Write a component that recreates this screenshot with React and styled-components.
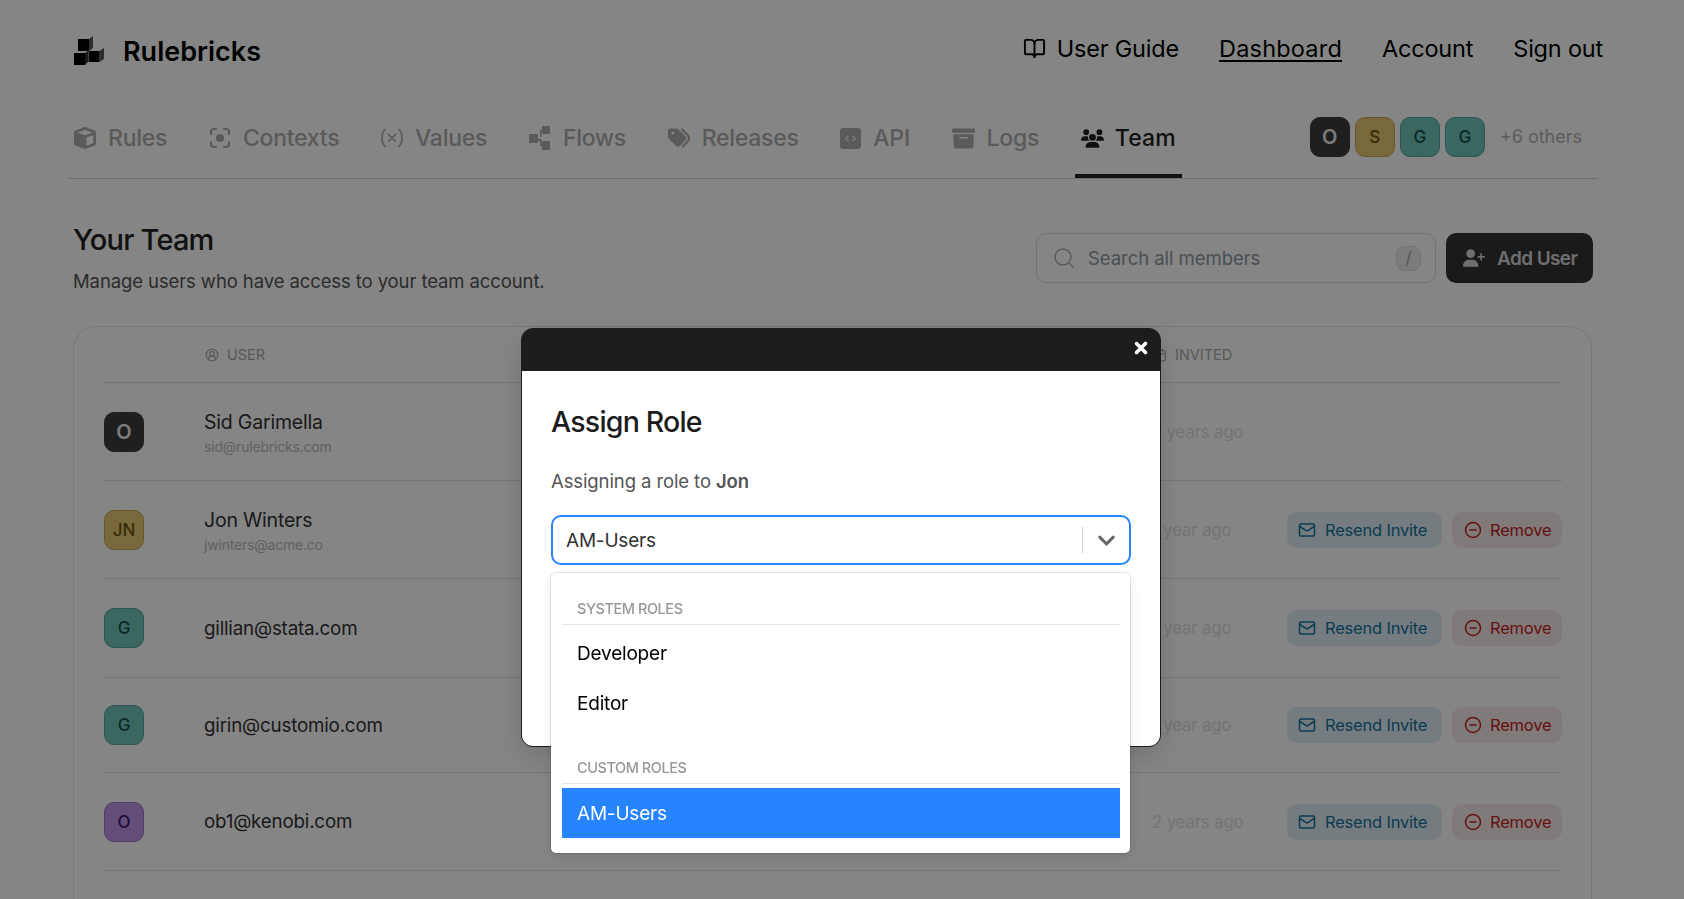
import React from 'react'
import styled, { createGlobalStyle } from 'styled-components'
import { FaCube, FaTags, FaBoxArchive, FaUsers, FaUserPlus, FaXmark } from 'react-icons/fa6'
import { BookOpen, Search, Mail, CircleMinus, CircleUserRound, Calendar, ChevronDown } from 'lucide-react'

const GlobalStyle = createGlobalStyle`
  html, body { margin: 0; padding: 0; background: #fff; }
  body { font-family: Inter, "Noto Sans", sans-serif; color: #222; }
  * { box-sizing: border-box; }
`

const Page = styled.div`
  width: 1684px;
  height: 899px;
  overflow: hidden;
  position: relative;
`
const Header = styled.header`
  height: 98px;
  padding: 4px 81px 0 73px;
  display: flex;
  align-items: center;
  justify-content: space-between;
`
const Brand = styled.div`
  display: flex;
  align-items: center;
  gap: 18px;
  font-size: 27px;
  font-weight: 600;
  letter-spacing: 0;
  color: #000;
`
const TopNav = styled.nav`
  display: flex;
  align-items: center;
  gap: 40px;
  font-size: 23.5px;
  letter-spacing: -0.2px;
  color: #000;
  margin-top: -6px;
`
const TopLink = styled.a`
  display: flex;
  align-items: center;
  gap: 11px;
  letter-spacing: ${p => (p.$active ? '0.2px' : 'inherit')};
  text-decoration: ${p => (p.$active ? 'underline' : 'none')};
  text-underline-offset: 3px;
  text-decoration-thickness: 2px;
`
const TabBar = styled.div`
  margin: 0 86px 0 68px;
  height: 81px;
  display: flex;
  align-items: stretch;
  justify-content: space-between;
  border-bottom: 1px solid #d5d5d5;
`
const Tabs = styled.div`
  display: flex;
  gap: 29.700px;
`
const Tab = styled.div`
  display: flex;
  align-items: center;
  gap: ${p => (p.$active ? '11px' : '12px')};
  padding: 4px 6px 0;
  font-size: 23px;
  font-weight: 500;
  letter-spacing: ${p => (p.$active ? '0.1px' : '-0.25px')};
  color: ${p => (p.$active ? '#1e1e1e' : '#adadad')};
  border-bottom: 4px solid ${p => (p.$active ? '#222' : 'transparent')};
`
const Presence = styled.div`
  display: flex;
  align-items: center;
  gap: 5px;
  padding: 0 16px 3px 0;
`
const Others = styled.span`
  margin-left: 10px;
  font-size: 18px;
  color: #b4b4b4;
`
const tones = {
  dark: { bg: '#3c3c3c', fg: '#eee', line: '#3c3c3c' },
  gold: { bg: '#e8c872', fg: '#6b5612', line: '#c4a655' },
  teal: { bg: '#72c6ba', fg: '#12504a', line: '#58a69a' },
  purple: { bg: '#bd96e8', fg: '#3c1e62', line: '#9c78c4' },
}
const Avatar = styled.div`
  width: 40px;
  height: 40px;
  flex: none;
  border-radius: 10px;
  display: flex;
  align-items: center;
  justify-content: center;
  font-size: ${p => (p.$tone === 'dark' ? '20px' : '17px')};
  font-weight: ${p => (p.$tone === 'dark' ? 600 : 500)};
  background: ${p => tones[p.$tone].bg};
  color: ${p => tones[p.$tone].fg};
  border: 1px solid ${p => tones[p.$tone].line};
`

const Section = styled.section`
  padding: 44px 92px 0 73px;
`
const SectionHead = styled.div`
  display: flex;
  justify-content: space-between;
  align-items: flex-start;
`
const Title = styled.h1`
  margin: 1px 0 0;
  font-size: 29px;
  line-height: 32px;
  font-weight: 500;
  letter-spacing: -0.8px;
  color: #222;
`
const Description = styled.p`
  margin: 13px 0 0;
  font-size: 18.5px;
  line-height: 24px;
  letter-spacing: -0.1px;
  color: #555;
`
const Toolbar = styled.div`
  display: flex;
  gap: 10px;
  margin: 10px -1px 0 0;
`
const SearchBox = styled.div`
  width: 400px;
  height: 50px;
  border: 1px solid #dcdcdc;
  border-radius: 10px;
  padding: 0 14px 0 15px;
  display: flex;
  align-items: center;
  gap: 12px;
  color: #8f98a3;
  font-size: 18.5px;
  letter-spacing: -0.05px;
  & > svg { color: #b0b0b0; }
`
const SearchText = styled.span`
  flex: 1;
`
const Kbd = styled.span`
  width: 25px;
  height: 25px;
  border-radius: 8px;
  border: 1px solid #dcdcdc;
  background: #eee;
  display: flex;
  align-items: center;
  justify-content: center;
  font-size: 17px;
  color: #a5a5a5;
`
const AddButton = styled.button`
  width: 147px;
  height: 50px;
  border: 0;
  border-radius: 10px;
  background: #333;
  color: #d4d4d4;
  display: flex;
  align-items: center;
  gap: 12px;
  padding: 0 0 0 17px;
  font: 600 19px Inter, sans-serif;
  letter-spacing: -0.6px;
`
const Card = styled.div`
  margin-top: 33px;
  border: 1px solid #e4e4e4;
  border-radius: 22px;
  padding: 0 29px 120px 30px;
`
const TableHead = styled.div`
  height: 56px;
  display: grid;
  grid-template-columns: 100px 948px 1fr;
  align-items: center;
  border-bottom: 1px solid #dfdfdf;
`
const HeadCell = styled.div`
  grid-column: ${p => p.$col};
  display: flex;
  align-items: center;
  gap: 8px;
  padding: 0 0 0 1px;
  font-size: 14.5px;
  color: #aaa;
`
const Row = styled.div`
  height: ${p => p.$h}px;
  display: grid;
  grid-template-columns: 100px 948px 135px 275px;
  align-items: center;
  border-bottom: 1px solid #e2e2e2;
`
const Who = styled.div`
  padding-top: ${p => (p.$plain ? 0 : 2)}px;
`
const Name = styled.div`
  font-size: ${p => (p.$plain ? '18.800px' : '19.500px')};
  letter-spacing: -0.2px;
  color: #333;
`
const Email = styled.div`
  margin-top: 4px;
  font-size: 14px;
  letter-spacing: -0.2px;
  color: #bababa;
`
const Invited = styled.div`
  font-size: 16.8px;
  letter-spacing: -0.15px;
  color: #dedede;
`
const Actions = styled.div`
  display: flex;
  gap: 10px;
`
const Pill = styled.button`
  height: 36px;
  width: ${p => (p.$danger ? '110px' : '155px')};
  border: 0;
  border-radius: 10px;
  display: flex;
  align-items: center;
  gap: ${p => (p.$danger ? '8px' : '9px')};
  padding-left: ${p => (p.$danger ? '12px' : '11px')};
  background: ${p => (p.$danger ? '#f8eaea' : '#e0edf5')};
  color: ${p => (p.$danger ? '#c42222' : '#14739f')};
  font: 400 16.5px Inter, sans-serif;
  letter-spacing: -0.2px;
`

const Overlay = styled.div`
  position: fixed;
  inset: 0;
  background: rgba(0, 0, 0, 0.48);
  display: flex;
  justify-content: center;
  align-items: flex-start;
  padding: 328px 2px 0 0;
`
const Modal = styled.div`
  width: 640px;
  height: 419px;
  border: 1px solid #1c1c1c;
  border-radius: 12px;
  background: #1c1c1c;
  display: flex;
  flex-direction: column;
  box-shadow: 0 10px 30px rgba(0, 0, 0, 0.15);
`
const ModalBar = styled.div`
  height: 42px;
  flex: none;
  display: flex;
  align-items: center;
  justify-content: flex-end;
  padding: 0 10px 4px 0;
  color: #fff;
`
const ModalBody = styled.div`
  flex: 1;
  position: relative;
  background: #fff;
  border-radius: 0 0 11px 11px;
  padding: 33px 29px 0 29px;
`
const ModalTitle = styled.h2`
  margin: 0;
  font-size: 28.5px;
  line-height: 36px;
  font-weight: 500;
  letter-spacing: -0.8px;
  color: #1c1c1c;
`
const ModalText = styled.p`
  margin: 29px 0 0;
  font-size: 18.5px;
  line-height: 24px;
  letter-spacing: -0.1px;
  color: #555;
  & b { font-weight: 600; }
`
const Select = styled.div`
  margin-top: 22px;
  height: 50px;
  border: 2px solid #2684ff;
  border-radius: 10px;
  display: flex;
  align-items: center;
  padding: 0 0 0 13px;
  font-size: 19px;
  letter-spacing: -0.2px;
  color: #333;
`
const SelectValue = styled.span`
  flex: 1;
`
const SelectDivider = styled.span`
  width: 1px;
  height: 26px;
  background: #ccc;
`
const SelectArrow = styled.span`
  width: 46px;
  display: flex;
  justify-content: center;
  color: #666;
`
const Menu = styled.div`
  position: absolute;
  left: 29px;
  right: 30px;
  top: 202px;
  height: 280px;
  background: #fff;
  border-radius: 5px;
  padding: 19px 10px 0 11px;
  box-shadow: 0 0 0 1px rgba(0, 0, 0, 0.1), 0 4px 11px rgba(0, 0, 0, 0.1);
`
const GroupLabel = styled.div`
  height: 33px;
  margin-top: ${p => p.$top || 0}px;
  padding: 0 0 0 15px;
  display: flex;
  align-items: center;
  border-bottom: 1px solid #e6e6e6;
  font-size: 14.5px;
  font-weight: 500;
  letter-spacing: -0.45px;
  color: #999;
`
const Option = styled.div`
  height: 50px;
  margin-top: ${p => p.$top || 0}px;
  padding-left: 15px;
  display: flex;
  align-items: center;
  font-size: 19px;
  letter-spacing: -0.2px;
  color: ${p => (p.$selected ? '#fff' : '#000')};
  background: ${p => (p.$selected ? '#2684ff' : 'transparent')};
`

// three stacked bricks, each with a thin shaded side
function Logo() {
  return (
    <svg width="32" height="32" viewBox="0 0 32 32">
      <rect x="5" y="4" width="11" height="12" fill="#000" />
      <path d="M16 4l4-3v12l-4 3z" fill="#555" />
      <rect x="1" y="18" width="11" height="12" fill="#000" />
      <path d="M12 18l3-2v11l-3 3z" fill="#333" />
      <rect x="15.5" y="16" width="11" height="11" fill="#000" />
      <path d="M26.5 16l4.5-3v11l-4.500 3z" fill="#555" />
    </svg>
  )
}

function ContextsIcon() {
  return (
    <svg width="22" height="22" viewBox="0 0 22 22" fill="none" stroke="currentColor" strokeWidth="2" strokeLinecap="round">
      <path d="M2 7V5a3 3 0 0 1 3-3h2M15 2h2a3 3 0 0 1 3 3v2M20 15v2a3 3 0 0 1-3 3h-2M7 20H5a3 3 0 0 1-3-3v-2" />
      <circle cx="11" cy="11" r="4" fill="currentColor" stroke="none" />
    </svg>
  )
}

function ValuesIcon() {
  return (
    <svg width="22" height="20" viewBox="0 0 22 20" fill="none" stroke="currentColor" strokeWidth="1.700" strokeLinecap="round">
      <path d="M4 1.500s-3 3-3 8.500 3 8.500 3 8.500M18 1.500s3 3 3 8.500-3 8.500-3 8.500" />
      <path d="M7.500 6.500l7 7M14.500 6.500l-7 7" />
    </svg>
  )
}

function FlowsIcon() {
  return (
    <svg width="22" height="24" viewBox="0 0 22 24" fill="currentColor">
      <rect x="0" y="8" width="9" height="9" rx="1" />
      <rect x="13" y="0" width="8" height="8" rx="1" />
      <rect x="13" y="15" width="8" height="9" rx="1" />
      <path d="M9 11h2V4h2v2h-0.500v5H9zM9 13h3.500v5H13v2h-2v-5H9z" />
    </svg>
  )
}

function ApiIcon() {
  return (
    <svg width="21" height="21" viewBox="0 0 20 20">
      <rect width="20" height="20" rx="3" fill="currentColor" />
      <path d="M8 7.500L5.500 10 8 12.500M12 7.500l2.500 2.500-2.500 2.500" fill="none" stroke="#e4e4e4" strokeWidth="1.400" />
    </svg>
  )
}

const tabs = [
  { label: 'Rules', icon: <FaCube size={22} /> },
  { label: 'Contexts', icon: <ContextsIcon /> },
  { label: 'Values', icon: <ValuesIcon /> },
  { label: 'Flows', icon: <FlowsIcon /> },
  { label: 'Releases', icon: <FaTags size={22} /> },
  { label: 'API', icon: <ApiIcon /> },
  { label: 'Logs', icon: <FaBoxArchive size={23} /> },
  { label: 'Team', icon: <FaUsers size={23} />, active: true },
]

const members = [
  { initials: 'O', tone: 'dark', name: 'Sid Garimella', email: 'sid@rulebricks.com', when: '2 years ago', h: 98 },
  { initials: 'JN', tone: 'gold', name: 'Jon Winters', email: 'jwinters@acme.co', when: '1 year ago', pending: true, h: 98 },
  { initials: 'G', tone: 'teal', name: 'gillian@stata.com', when: '1 year ago', pending: true, h: 99 },
  { initials: 'G', tone: 'teal', name: 'girin@customio.com', when: '1 year ago', pending: true, h: 95 },
  { initials: 'O', tone: 'purple', name: 'ob1@kenobi.com', when: '2 years ago', pending: true, h: 98 },
]

export default function App() {
  return (
    <Page>
      <GlobalStyle />
      <Header>
        <Brand>
          <Logo />
          Rulebricks
        </Brand>
        <TopNav>
          <TopLink><BookOpen size={23} strokeWidth={2} />User Guide</TopLink>
          <TopLink $active>Dashboard</TopLink>
          <TopLink>Account</TopLink>
          <TopLink>Sign out</TopLink>
        </TopNav>
      </Header>

      <TabBar>
        <Tabs>
          {tabs.map(t => (
            <Tab key={t.label} $active={t.active}>{t.icon}{t.label}</Tab>
          ))}
        </Tabs>
        <Presence>
          <Avatar $tone="dark">O</Avatar>
          <Avatar $tone="gold">S</Avatar>
          <Avatar $tone="teal">G</Avatar>
          <Avatar $tone="teal">G</Avatar>
          <Others>+6 others</Others>
        </Presence>
      </TabBar>

      <Section>
        <SectionHead>
          <div>
            <Title>Your Team</Title>
            <Description>Manage users who have access to your team account.</Description>
          </div>
          <Toolbar>
            <SearchBox>
              <Search size={24} strokeWidth={1.5} />
              <SearchText>Search all members</SearchText>
              <Kbd>/</Kbd>
            </SearchBox>
            <AddButton><FaUserPlus size={22} />Add User</AddButton>
          </Toolbar>
        </SectionHead>

        <Card>
          <TableHead>
            <HeadCell $col={2}><CircleUserRound size={14} />USER</HeadCell>
            <HeadCell $col={3}><Calendar size={14} />INVITED</HeadCell>
          </TableHead>
          {members.map(m => (
            <Row key={m.name} $h={m.h}>
              <Avatar $tone={m.tone}>{m.initials}</Avatar>
              <Who $plain={!m.email}>
                <Name $plain={!m.email}>{m.name}</Name>
                {m.email && <Email>{m.email}</Email>}
              </Who>
              <Invited>{m.when}</Invited>
              {m.pending && (
                <Actions>
                  <Pill><Mail size={18} />Resend Invite</Pill>
                  <Pill $danger><CircleMinus size={18} />Remove</Pill>
                </Actions>
              )}
            </Row>
          ))}
        </Card>
      </Section>

      <Overlay>
        <Modal>
          <ModalBar><FaXmark size={18} stroke="currentColor" strokeWidth={40} /></ModalBar>
          <ModalBody>
            <ModalTitle>Assign Role</ModalTitle>
            <ModalText>Assigning a role to <b>Jon</b></ModalText>
            <Select>
              <SelectValue>AM-Users</SelectValue>
              <SelectDivider />
              <SelectArrow><ChevronDown size={27} strokeWidth={2.6} /></SelectArrow>
            </Select>
            <Menu>
              <GroupLabel>SYSTEM ROLES</GroupLabel>
              <Option $top={3}>Developer</Option>
              <Option>Editor</Option>
              <GroupLabel $top={23}>CUSTOM ROLES</GroupLabel>
              <Option $top={4} $selected>AM-Users</Option>
            </Menu>
          </ModalBody>
        </Modal>
      </Overlay>
    </Page>
  )
}
